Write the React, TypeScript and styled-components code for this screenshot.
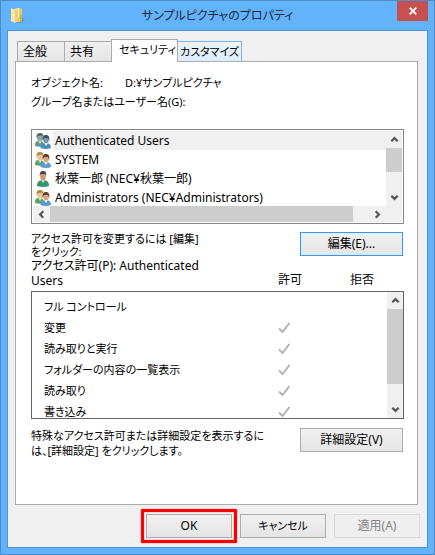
import React from 'react';
import styled, { createGlobalStyle, css } from 'styled-components';

const GlobalStyle = createGlobalStyle`
  *, *::before, *::after { box-sizing: border-box; }
  body {
    margin: 0;
    background: #63b2fc;
    color: #000;
    font-family: "Noto Sans", "Noto Sans CJK JP", sans-serif;
    font-size: 12px;
    line-height: 16px;
    font-feature-settings: "palt";
  }
  button { font: inherit; font-feature-settings: inherit; color: inherit; margin: 0; padding: 0; }
  ul { list-style: none; margin: 0; padding: 0; }
  h1, p { margin: 0; font-weight: 400; }
  svg { display: block; flex: none; }
`;

const Frame = styled.main`
  display: flex;
  flex-direction: column;
  min-height: 100vh;
  padding: 0 6px 6px;
  background: #63b2fc;
  border: 1px solid #4b8bc6;
`;

const TitleBar = styled.header`
  display: grid;
  grid-template-columns: 1fr auto 1fr;
  height: 29px;
`;

const TitleIcon = styled.div`
  padding: 6px 0 0 3px;
`;

const Title = styled.h1`
  font-size: 12px;
  line-height: 30px;
  white-space: nowrap;
  color: #1c2a3a;
`;

const CloseButton = styled.button`
  display: grid;
  place-items: center;
  justify-self: end;
  width: 31px;
  height: 20px;
  border: 0;
  background: #c75050;
`;

const Client = styled.div`
  flex: 1;
  display: flex;
  flex-direction: column;
  padding: 8px 7px 9px;
  background: #f0f0f0;
  border: 1px solid #4d92d6;
`;

const Tabs = styled.div`
  display: flex;
  align-items: flex-end;
  padding-left: 2px;
`;

const Tab = styled.button<{ $kind?: 'active' | 'hot' }>`
  height: 20px;
  padding: 0 0 0 5px;
  min-width: 48px;
  margin-right: -1px;
  text-align: left;
  white-space: nowrap;
  border: 1px solid #acacac;
  border-bottom: 0;
  background: linear-gradient(#f0f0f0, #e5e5e5);
  ${(p) => p.$kind === 'active' && css`
    z-index: 1;
    height: 23px;
    min-width: 67px;
    padding: 0 0 3px 7px;
    margin-bottom: -1px;
    font-size: 11px;
    background: #fff;
  `}
  ${(p) => p.$kind === 'hot' && css`
    min-width: 64px;
    padding: 0 2px;
    font-size: 11px;
    text-align: center;
    border-color: #7eb4ea;
    background: linear-gradient(#ecf4fc, #dcecfc);
  `}
`;

const Panel = styled.section`
  flex: 1;
  padding: 11px 13px 16px 15px;
  margin-right: 2px;
  background: #fff;
  border: 1px solid #acacac;
`;

const ObjectRow = styled.div`
  display: grid;
  grid-template-columns: 94px 1fr;
  font-size: 11px;
  line-height: 20px;
`;

const GroupLabel = styled.p`
  font-size: 11px;
  line-height: 18px;
  margin-bottom: 18px;
`;

const ListBox = styled.div`
  display: grid;
  grid-template-columns: 1fr 16px;
  padding: 1px;
  margin-bottom: 8px;
  border: 1px solid #828790;
`;

const Users = styled.ul`
  height: 75px;
  overflow: hidden;
`;

const UserRow = styled.li`
  display: grid;
  grid-template-columns: 20px 1fr;
  align-items: center;
  height: 19px;
  svg { justify-self: center; }
`;

const UserName = styled.span<{ $selected: boolean }>`
  padding-left: 2px;
  line-height: 19px;
  white-space: nowrap;
  overflow: hidden;
  background: ${(p) => (p.$selected ? '#f0f0f0' : 'transparent')};
`;

const ScrollColumn = styled.div`
  display: flex;
  flex-direction: column;
  background: #f0f0f0;
`;

const ScrollRow = styled.div`
  display: flex;
  grid-column: 1 / -1;
  height: 16px;
  padding-right: 16px;
  background: #f0f0f0;
`;

const ScrollButton = styled.button`
  display: grid;
  place-items: center;
  flex: none;
  width: 17px;
  height: 17px;
  border: 0;
  background: transparent;
`;

const ScrollTrack = styled.div<{ $row?: boolean }>`
  display: flex;
  flex: 1;
  flex-direction: ${(p) => (p.$row ? 'row' : 'column')};
`;

const ScrollThumb = styled.div<{ $share: number }>`
  flex: 0 0 ${(p) => p.$share}%;
  background: #cdcdcd;
`;

const ActionRow = styled.div`
  display: flex;
  justify-content: space-between;
  align-items: flex-start;
  padding-right: 1px;
`;

const EditNote = styled.p`
  font-size: 11px;
  line-height: 13px;
`;

const Note = styled.p`
  font-size: 11px;
  line-height: 15px;
`;

const PermissionTitle = styled.p`
  line-height: 15px;
`;

const PushButton = styled.button<{ $tone?: 'focus' | 'off'; $wide?: boolean; $small?: boolean }>`
  flex: none;
  width: ${(p) => (p.$wide ? 103 : 86)}px;
  height: 24px;
  font-size: ${(p) => (p.$small ? 11 : 12)}px;
  line-height: 20px;
  border: 1px solid #acacac;
  background: linear-gradient(#f0f0f0, #e5e5e5);
  ${(p) => p.$tone === 'focus' && css`border-color: #3399ff;`}
  ${(p) => p.$tone === 'off' && css`
    color: #838383;
    border-color: #d9d9d9;
    background: #efefef;
  `}
`;

const PermissionHead = styled.div`
  display: grid;
  grid-template-columns: 1fr 72px 54px;
  align-items: end;
  padding-bottom: 3px;
`;

const PermissionBox = styled.div`
  display: grid;
  grid-template-columns: 1fr 16px;
  height: 128px;
  margin-bottom: 9px;
  border: 1px solid #646464;
`;

const PermissionView = styled.div`
  padding: 4px 0 0 12px;
  overflow: hidden;
`;

const PermissionTable = styled.table`
  width: 100%;
  border-collapse: collapse;
  font-size: 11px;
  th, td { height: 21px; padding: 0; font-weight: 400; text-align: left; }
`;

const MarkColumn = styled.col<{ $width: number }>`
  width: ${(p) => p.$width}px;
`;

const Footer = styled.footer`
  display: flex;
  justify-content: flex-end;
  gap: 8px;
  padding-top: 9px;
`;

const Highlighted = styled.div`
  position: relative;
  display: flex;
  &::after {
    content: "";
    position: absolute;
    inset: -5px;
    border: 3px solid #fd0000;
    border-radius: 1px;
    box-shadow: 0 0 1px #fd0000, inset 0 0 1px #fd0000;
    pointer-events: none;
  }
`;

const FolderIcon = () => (
  <svg width="15" height="17" viewBox="0 0 15 17" aria-hidden="true">
    <path d="M8 13l5-2 1 3-3 2H7z" fill="#4b88bd" opacity=".6" />
    <path d="M4 2l6-1 2 1v13l-8 0z" fill="#e8c765" />
    <path d="M5 2l4-1v9l-4 1z" fill="#fff6cf" />
    <path d="M1 1l4 2v13l-4-2z" fill="#f9e8a2" />
    <path d="M5 3l3-1v12l-3 2z" fill="#edce77" />
    <path d="M10 8h2v7h-2z" fill="#d4ac45" />
  </svg>
);

type Palette = { backHair: string; backSkin: string; backBody: string; hair: string; skin: string; body: string };

const PairIcon = ({ c }: { c: Palette }) => (
  <svg width="16" height="16" viewBox="0 0 16 16" aria-hidden="true">
    <path d="M0 13c0-4 1-5 4-5s5 1 5 5c-3 1-6 1-9 0z" fill={c.backBody} />
    <path d="M3.500 8h3L5 11z" fill="#e8f0e8" />
    <ellipse cx="5" cy="4.500" rx="3" ry="3.800" fill={c.backSkin} />
    <path d="M1.600 5C1 1 3 0 5 0s4 1 3.400 4L7 2.500 3 3z" fill={c.backHair} />
    <path d="M5.500 15c0-4 2-5 5-5s5.500 1 5.500 5c-3 1.300-7 1.300-10.500 0z" fill={c.body} />
    <path d="M9 10h4l-2 3z" fill="#eef5fb" />
    <ellipse cx="11" cy="6.800" rx="2.800" ry="3.500" fill={c.skin} />
    <path d="M7.700 8C7 3 9 2 11 2s4 1.500 3.200 6L13 5 9 5z" fill={c.hair} />
  </svg>
);

const PersonIcon = () => (
  <svg width="16" height="16" viewBox="0 0 16 16" aria-hidden="true">
    <path d="M2 15c0-4 2-6 6-6s6 2 6 6c-4 1.300-8 1.300-12 0z" fill="#35946d" />
    <path d="M6 9h4l-2 3z" fill="#dcebdc" />
    <ellipse cx="8" cy="5.500" rx="2.800" ry="4" fill="#c99876" />
    <path d="M4.800 5C4.500 1 6 0 8 0s3.800 1 3.200 5L10 3 6 3z" fill="#4c463f" />
  </svg>
);

const greyPair: Palette = { backHair: '#4f6b63', backSkin: '#8fa69c', backBody: '#5e9b7c', hair: '#3d5568', skin: '#7b98ab', body: '#4b8dc2' };
const warmPair: Palette = { backHair: '#b98a35', backSkin: '#e7c49a', backBody: '#5da565', hair: '#5f4029', skin: '#d9a57c', body: '#5b98d4' };

const turns = { up: 0, right: 90, down: 180, left: 270 };

const Chevron = ({ to }: { to: keyof typeof turns }) => (
  <svg width="9" height="9" viewBox="0 0 9 9" aria-hidden="true">
    <path d="M1.300 6.300L4.500 3.100l3.200 3.200" transform={`rotate(${turns[to]} 4.5 4.5)`} fill="none" stroke="#555" strokeWidth="2.200" />
  </svg>
);

const CheckMark = () => (
  <svg width="13" height="12" viewBox="0 0 13 12" role="img" aria-label="許可">
    <path d="M1 6.500l3.500 3.500L11.500 1" fill="none" stroke="#b4b4b4" strokeWidth="2" />
  </svg>
);

const VerticalScroll = ({ share }: { share: number }) => (
  <ScrollColumn>
    <ScrollButton aria-label="上へスクロール"><Chevron to="up" /></ScrollButton>
    <ScrollTrack><ScrollThumb $share={share} /></ScrollTrack>
    <ScrollButton aria-label="下へスクロール"><Chevron to="down" /></ScrollButton>
  </ScrollColumn>
);

const users = [
  { name: 'Authenticated Users', icon: <PairIcon c={greyPair} /> },
  { name: 'SYSTEM', icon: <PairIcon c={warmPair} /> },
  { name: '秋葉一郎 (NEC¥秋葉一郎)', icon: <PersonIcon /> },
  { name: 'Administrators (NEC¥Administrators)', icon: <PairIcon c={warmPair} /> },
];

const permissions = [
  { name: 'フル コントロール', allowed: false },
  { name: '変更', allowed: true },
  { name: '読み取りと実行', allowed: true },
  { name: 'フォルダーの内容の一覧表示', allowed: true },
  { name: '読み取り', allowed: true },
  { name: '書き込み', allowed: true },
];

export default function App() {
  return (
    <>
      <GlobalStyle />
      <Frame>
        <TitleBar>
          <TitleIcon><FolderIcon /></TitleIcon>
          <Title>サンプルピクチャのプロパティ</Title>
          <CloseButton aria-label="閉じる">
            <svg width="8" height="8" viewBox="0 0 8 8" aria-hidden="true">
              <path d="M.7.7l6.600 6.600M7.300.7L.7 7.300" stroke="#fff" strokeWidth="1.800" />
            </svg>
          </CloseButton>
        </TitleBar>
        <Client>
          <Tabs role="tablist">
            <Tab role="tab">全般</Tab>
            <Tab role="tab">共有</Tab>
            <Tab role="tab" aria-selected="true" $kind="active">セキュリティ</Tab>
            <Tab role="tab" $kind="hot">カスタマイズ</Tab>
          </Tabs>
          <Panel role="tabpanel">
            <ObjectRow>
              <span>オブジェクト名:</span>
              <span>D:¥サンプルピクチャ</span>
            </ObjectRow>
            <GroupLabel id="group-label">グループ名またはユーザー名(G):</GroupLabel>
            <ListBox>
              <Users role="listbox" aria-labelledby="group-label">
                {users.map((user, i) => (
                  <UserRow key={user.name} role="option" aria-selected={i === 0}>
                    {user.icon}
                    <UserName $selected={i === 0}>{user.name}</UserName>
                  </UserRow>
                ))}
              </Users>
              <VerticalScroll share={58} />
              <ScrollRow>
                <ScrollButton aria-label="左へスクロール"><Chevron to="left" /></ScrollButton>
                <ScrollTrack $row><ScrollThumb $share={95} /></ScrollTrack>
                <ScrollButton aria-label="右へスクロール"><Chevron to="right" /></ScrollButton>
              </ScrollRow>
            </ListBox>
            <ActionRow>
              <EditNote>アクセス許可を変更するには [編集]<br />をクリック:</EditNote>
              <PushButton $wide $tone="focus">編集(E)...</PushButton>
            </ActionRow>
            <PermissionHead>
              <PermissionTitle id="permission-label">アクセス許可(P): Authenticated<br />Users</PermissionTitle>
              <span>許可</span>
              <span>拒否</span>
            </PermissionHead>
            <PermissionBox>
              <PermissionView>
                <PermissionTable aria-labelledby="permission-label">
                  <colgroup>
                    <col />
                    <MarkColumn $width={72} />
                    <MarkColumn $width={37} />
                  </colgroup>
                  <tbody>
                    {permissions.map((p) => (
                      <tr key={p.name}>
                        <th scope="row">{p.name}</th>
                        <td>{p.allowed && <CheckMark />}</td>
                        <td />
                      </tr>
                    ))}
                  </tbody>
                </PermissionTable>
              </PermissionView>
              <VerticalScroll share={82} />
            </PermissionBox>
            <ActionRow>
              <Note>特殊なアクセス許可または詳細設定を表示するに<br />は、[詳細設定] をクリックします。</Note>
              <PushButton $wide>詳細設定(V)</PushButton>
            </ActionRow>
          </Panel>
          <Footer>
            <Highlighted><PushButton>OK</PushButton></Highlighted>
            <PushButton $small>キャンセル</PushButton>
            <PushButton $tone="off" disabled>適用(A)</PushButton>
          </Footer>
        </Client>
      </Frame>
    </>
  );
}
